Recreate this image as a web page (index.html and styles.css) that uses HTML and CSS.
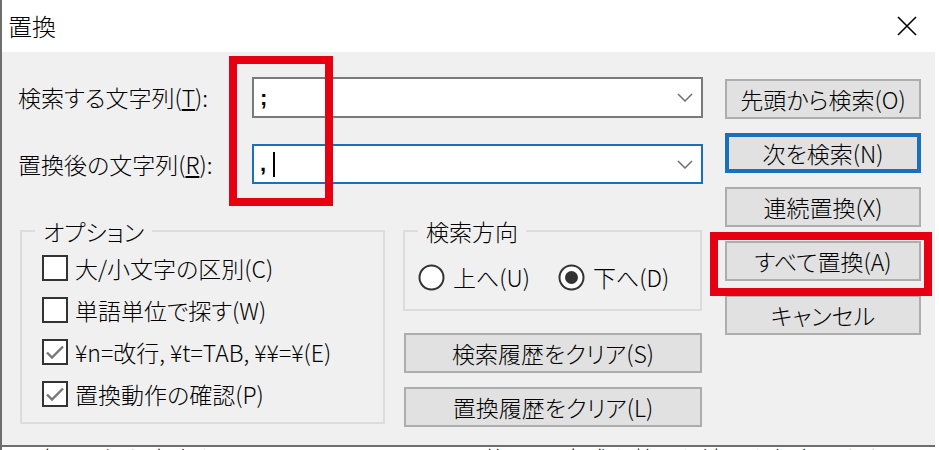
FILE: index.html
```html
<!DOCTYPE html>
<html lang="ja">
<head>
<meta charset="utf-8">
<title>置換</title>
<link rel="stylesheet" href="styles.css">
</head>
<body>
<div class="window">
  <header class="titlebar">
    <span class="title">置換</span>
    <span class="close" aria-label="閉じる">
      <svg width="20" height="20" viewBox="0 0 20 20"><path d="M1 1L19 19M19 1L1 19" stroke="#000" stroke-width="1.6" fill="none"/></svg>
    </span>
  </header>

  <main class="client">
    <div class="main">
      <div class="field field-find">
        <label class="field-label">検索する文字列(<u>T</u>):</label>
        <div class="combo">
          <span class="value">;</span>
          <svg class="chevron" width="16" height="9" viewBox="0 0 16 9"><path d="M1 1L8 8L15 1" stroke="#6f6f6f" stroke-width="1.5" fill="none"/></svg>
        </div>
      </div>
      <div class="field field-replace">
        <label class="field-label">置換後の文字列(<u>R</u>):</label>
        <div class="combo focused">
          <span class="value">,<span class="caret"></span></span>
          <svg class="chevron" width="16" height="9" viewBox="0 0 16 9"><path d="M1 1L8 8L15 1" stroke="#6f6f6f" stroke-width="1.5" fill="none"/></svg>
        </div>
      </div>

      <div class="lower">
        <fieldset class="group options">
          <legend>オプション</legend>
          <div class="rows">
            <label class="check"><span class="box"></span>大/小文字の区別(C)</label>
            <label class="check"><span class="box"></span>単語単位で探す(W)</label>
            <label class="check"><span class="box checked"><svg width="22" height="22" viewBox="0 0 22 22"><path d="M3 11.5L8 16.5L19 5.5" stroke="#777" stroke-width="2.4" fill="none"/></svg></span>¥n=改行, ¥t=TAB, ¥¥=¥(E)</label>
            <label class="check"><span class="box checked"><svg width="22" height="22" viewBox="0 0 22 22"><path d="M3 11.5L8 16.5L19 5.5" stroke="#777" stroke-width="2.4" fill="none"/></svg></span>置換動作の確認(P)</label>
          </div>
        </fieldset>

        <div class="side">
          <fieldset class="group direction">
            <legend>検索方向</legend>
            <div class="radios">
              <label class="radio">
                <svg width="27" height="27" viewBox="0 0 27 27"><circle cx="13.5" cy="13.5" r="12" fill="#fff" stroke="#333" stroke-width="2"/></svg>上へ(U)
              </label>
              <label class="radio">
                <svg width="27" height="27" viewBox="0 0 27 27"><circle cx="13.5" cy="13.5" r="12" fill="#fff" stroke="#333" stroke-width="2"/><circle cx="13.5" cy="13.5" r="6.5" fill="#333"/></svg>下へ(D)
              </label>
            </div>
          </fieldset>
          <button class="btn">検索履歴をクリア(S)</button>
          <button class="btn">置換履歴をクリア(L)</button>
        </div>
      </div>
    </div>

    <div class="buttons">
      <button class="btn">先頭から検索(O)</button>
      <button class="btn default">次を検索(N)</button>
      <button class="btn">連続置換(X)</button>
      <button class="btn">すべて置換(A)</button>
      <button class="btn">キャンセル</button>
    </div>
  </main>

  <div class="backdrop"><p class="backdrop-line">一覧の区切り文字をセミコロンからカンマへ置換して、書式を整えた結果を保存します。</p></div>

  <div class="mark mark-fields"></div>
  <div class="mark mark-all"></div>
</div>
</body>
</html>
```

FILE: styles.css
```css
* {
  box-sizing: border-box;
}

body {
  margin: 0;
  background: #fff;
  color: #000;
  font-family: "Noto Sans CJK JP", sans-serif;
  font-feature-settings: "palt";
  font-weight: 300;
}

.window {
  position: relative;
  width: 939px;
  height: 450px;
  border-left: 2px solid #6e6e6e;
  background: #fff;
  display: flex;
  flex-direction: column;
  overflow: hidden;
}

/* title bar */
.titlebar {
  flex: none;
  height: 52px;
  display: flex;
  align-items: center;
  justify-content: space-between;
  padding: 0 22px 0 6px;
}

.title {
  font-size: 24px;
  line-height: 1;
}

.close svg {
  display: block;
}

/* dialog body */
.client {
  flex: none;
  height: 395px;
  margin-right: 4px;
  background: #f0f0f0;
  border-bottom: 2px solid #6e6e6e;
  display: flex;
  font-size: 23px;
  line-height: 1;
}

.main {
  width: 701px;
  padding-left: 16px;
}

.field {
  display: grid;
  grid-template-columns: 234px 451px;
  align-items: center;
}

.field-find {
  margin-top: 25px;
}

.field-replace {
  margin-top: 26px;
}

.field-label {
  white-space: nowrap;
}

.combo {
  height: 41px;
  background: #fff;
  border: 2px solid #7a7a7a;
  display: flex;
  align-items: center;
  padding: 0 8px 0 6px;
}

.combo.focused {
  height: 40px;
  border-color: #1a70bc;
}

.value {
  flex: 1;
  display: flex;
  align-items: center;
  font-family: "Liberation Sans", sans-serif;
  font-size: 22px;
  font-weight: bold;
}

.caret {
  width: 2px;
  height: 25px;
  margin-left: 7px;
  background: #000;
}

.chevron {
  display: block;
  flex: none;
}

/* lower part: option groups and history buttons */
.lower {
  margin: 32px 0 0 2px;
  display: flex;
  align-items: flex-start;
  gap: 18px;
}

.group {
  margin: 0;
  padding: 0;
  min-width: 0;
  border: 2px solid #dcdcdc;
}

.group legend {
  margin-left: 13px;
  padding: 0 8px;
  font-size: 23px;
  line-height: 30px;
}

.options {
  width: 365px;
}

.rows {
  display: flex;
  flex-direction: column;
  padding: 1px 0 7px 20px;
}

.check {
  height: 42px;
  display: flex;
  align-items: center;
  gap: 7px;
  white-space: nowrap;
}

.box {
  flex: none;
  width: 26px;
  height: 26px;
  border: 2px solid #333;
  background: #fff;
  display: flex;
  align-items: center;
  justify-content: center;
}

.box svg {
  display: block;
}

.side {
  width: 299px;
  display: flex;
  flex-direction: column;
}

.radios {
  display: flex;
  padding: 10px 0 11px 13px;
}

.radio {
  height: 42px;
  display: flex;
  align-items: center;
  gap: 8px;
  white-space: nowrap;
}

.radio svg {
  display: block;
  flex: none;
}

.radio:first-child {
  width: 140px;
}

.btn {
  height: 40px;
  padding: 0;
  background: #e1e1e1;
  border: 2px solid #adadad;
  color: #000;
  font-family: inherit;
  font-feature-settings: "palt";
  font-weight: 300;
  font-size: 23px;
  line-height: 1;
}

.btn.default {
  border: 4px solid #1a70bc;
}

.side .btn {
  width: 298px;
  margin: 22px 0 0 1px;
}

.side .btn + .btn {
  margin-top: 14px;
}

.buttons {
  width: 196px;
  margin-left: 22px;
  padding-top: 27px;
  display: flex;
  flex-direction: column;
  gap: 14px;
}

/* document text behind the dialog */
.backdrop {
  flex: 1;
  overflow: hidden;
}

.backdrop-line {
  margin: 0 0 0 6px;
  font-size: 24px;
  line-height: 24px;
  white-space: nowrap;
}

/* red annotation frames */
.mark {
  position: absolute;
  border: 8px solid #e60012;
}

.mark-fields {
  left: 227px;
  top: 56px;
  width: 104px;
  height: 150px;
}

.mark-all {
  left: 708px;
  top: 232px;
  width: 222px;
  height: 64px;
}
```
